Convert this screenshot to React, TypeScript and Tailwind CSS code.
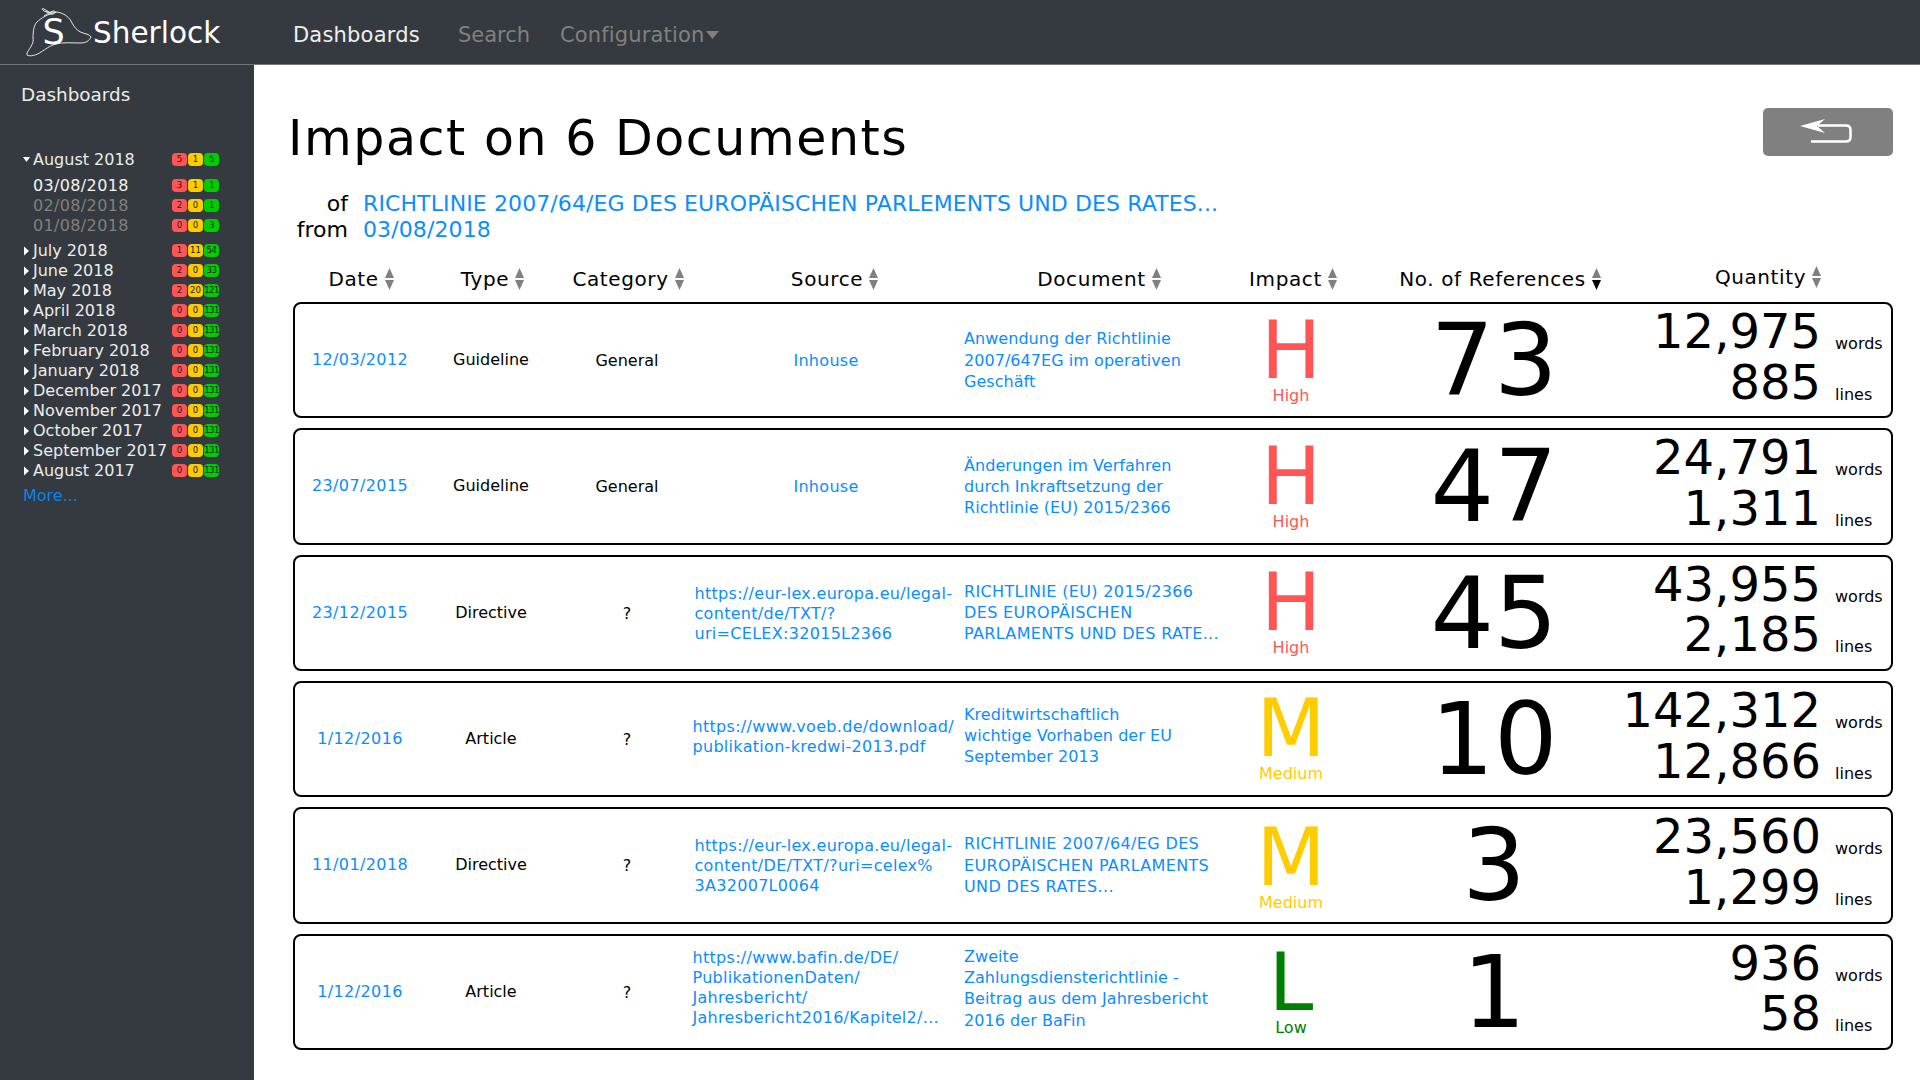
import React from "react";

type Doc = {
  date: string;
  type: string;
  category: string;
  source: string;
  sourceWidth?: string;
  document: string;
  docClass: string;
  level: "H" | "M" | "L";
  impactOffset: string;
  refs: number;
  words: string;
  lines: string;
};

const docs: Doc[] = [
  {
    date: "12/03/2012",
    type: "Guideline",
    category: "General",
    source: "Inhouse",
    document: "Anwendung der Richtlinie\n2007/647EG im operativen\nGeschäft",
    docClass: "tracking-[0.05px]",
    level: "H",
    impactOffset: "pb-[3px]",
    refs: 73,
    words: "12,975",
    lines: "885",
  },
  {
    date: "23/07/2015",
    type: "Guideline",
    category: "General",
    source: "Inhouse",
    document: "Änderungen im Verfahren\ndurch Inkraftsetzung der\nRichtlinie (EU) 2015/2366",
    docClass: "tracking-[0.05px]",
    level: "H",
    impactOffset: "pb-[3px]",
    refs: 47,
    words: "24,791",
    lines: "1,311",
  },
  {
    date: "23/12/2015",
    type: "Directive",
    category: "?",
    source: "https://eur-lex.europa.eu/legal-\ncontent/de/TXT/?\nuri=CELEX:32015L2366",
    sourceWidth: "w-[263px]",
    document: "RICHTLINIE (EU) 2015/2366\nDES EUROPÄISCHEN\nPARLAMENTS UND DES RATE...",
    docClass: "tracking-[0.35px]",
    level: "H",
    impactOffset: "pb-[3px]",
    refs: 45,
    words: "43,955",
    lines: "2,185",
  },
  {
    date: "1/12/2016",
    type: "Article",
    category: "?",
    source: "https://www.voeb.de/download/\npublikation-kredwi-2013.pdf",
    sourceWidth: "w-[267px] mb-[6px]",
    document: "Kreditwirtschaftlich\nwichtige Vorhaben der EU\nSeptember 2013",
    docClass: "tracking-[0.05px] pb-[7px]",
    level: "M",
    impactOffset: "pb-[4px]",
    refs: 10,
    words: "142,312",
    lines: "12,866",
  },
  {
    date: "11/01/2018",
    type: "Directive",
    category: "?",
    source: "https://eur-lex.europa.eu/legal-\ncontent/DE/TXT/?uri=celex%\n3A32007L0064",
    sourceWidth: "w-[263px]",
    document: "RICHTLINIE 2007/64/EG DES\nEUROPÄISCHEN PARLAMENTS\nUND DES RATES...",
    docClass: "tracking-[0.35px]",
    level: "M",
    impactOffset: "pt-px",
    refs: 3,
    words: "23,560",
    lines: "1,299",
  },
  {
    date: "1/12/2016",
    type: "Article",
    category: "?",
    source: "https://www.bafin.de/DE/\nPublikationenDaten/\nJahresbericht/\nJahresbericht2016/Kapitel2/...",
    sourceWidth: "w-[267px] mb-[10px]",
    document: "Zweite\nZahlungsdiensterichtlinie -\nBeitrag aus dem Jahresbericht\n2016 der BaFin",
    docClass: "tracking-[0.05px] pb-[7px]",
    level: "L",
    impactOffset: "pb-[2px]",
    refs: 1,
    words: "936",
    lines: "58",
  },
];

const months = [
  ["July 2018", "1", "11", "54"],
  ["June 2018", "2", "0", "33"],
  ["May 2018", "2", "20", "121"],
  ["April 2018", "0", "0", "131"],
  ["March 2018", "0", "0", "131"],
  ["February 2018", "0", "0", "131"],
  ["January 2018", "0", "0", "131"],
  ["December 2017", "0", "0", "131"],
  ["November 2017", "0", "0", "131"],
  ["October 2017", "0", "0", "131"],
  ["September 2017", "0", "0", "131"],
  ["August 2017", "0", "0", "131"],
];

const levelStyle = {
  H: { text: "text-[#ff5555]", label: "High" },
  M: { text: "text-[#ffcc00]", label: "Medium" },
  L: { text: "text-[#008000]", label: "Low" },
};

const Badges = ({ r, y, g }: { r: string; y: string; g: string }) => (
  <div className="-mt-[2px] flex gap-px text-[8.5px] leading-none text-[#1a1a1a]">
    <span className="flex h-[13px] w-[15px] items-center justify-center rounded-[4px] bg-[#ff5555]">{r}</span>
    <span className="flex h-[13px] w-[15px] items-center justify-center rounded-[4px] bg-[#ffcc00]">{y}</span>
    <span className="flex h-[13px] w-[15px] items-center justify-center rounded-[4px] bg-[#00cc00] tracking-[-0.5px]">{g}</span>
  </div>
);

const SortArrows = ({ active }: { active?: boolean }) => (
  <svg width="9" height="22" viewBox="0 0 9 22" className="ml-[6px] shrink-0">
    <path d="M4.5 0 L9 10 L0 10 Z" fill="#808080" />
    <path d="M4.5 22 L9 12 L0 12 Z" fill={active ? "#000000" : "#808080"} />
  </svg>
);

const HeadCell = ({ label, active, className }: { label: string; active?: boolean; className?: string }) => (
  <div className={`flex items-center justify-center ${className ?? ""}`}>
    {label}
    <SortArrows active={active} />
  </div>
);

const Row = ({ doc }: { doc: Doc }) => {
  const level = levelStyle[doc.level];
  return (
    <div className="grid h-[116.33px] grid-cols-[130px_132px_133px_272px_263px_132px_274px_minmax(0,1fr)] grid-rows-[minmax(0,1fr)] items-center rounded-[8px] border-2 border-black text-center text-[16px]">
      <a className="tracking-[0.4px] text-[#0a8dff]">{doc.date}</a>
      <div>{doc.type}</div>
      <div className="pl-[7px] pt-[2px]">{doc.category}</div>
      <div className="flex justify-center pt-[2px] tracking-[0.3px] text-[#0a8dff]">
        <a className={`whitespace-pre-line text-left leading-[20px] ${doc.sourceWidth ?? "text-center"}`}>{doc.source}</a>
      </div>
      <a className={`whitespace-pre-line pl-[2px] text-left leading-[21.33px] text-[#0a8dff] ${doc.docClass}`}>{doc.document}</a>
      <div className={`flex flex-col items-center ${doc.impactOffset} ${level.text}`}>
        <span className="text-[80px] leading-[80px]">{doc.level}</span>
        <span className="mt-[-6px] leading-[22px]">{level.label}</span>
      </div>
      <div className="pt-[2px] text-[100px] leading-none">{doc.refs}</div>
      <div className="-ml-[20px] pb-[7px]">
        {[
          [doc.words, "words"],
          [doc.lines, "lines"],
        ].map(([value, unit]) => (
          <div key={unit} className="flex h-[50.5px] items-baseline justify-end">
            <span className="text-[48px] leading-[50px]">{value}</span>
            <span className="ml-[14px] w-[56px] translate-y-px text-left leading-[20px]">{unit}</span>
          </div>
        ))}
      </div>
    </div>
  );
};

export default function App() {
  return (
    <div className="flex h-screen flex-col overflow-hidden bg-white font-['DejaVu_Sans',sans-serif] text-black">
      <header className="flex h-[65px] shrink-0 items-center border-b border-[#70757a] bg-[#343a40]">
        <div className="relative ml-[24px] flex h-[64px] w-[240px] items-center">
          <svg width="70" height="64" viewBox="24 0 70 64" className="shrink-0">
            <g fill="none" stroke="#e8e8e8" strokeWidth="1">
              <path d="M27 53 C31 46 34 43 33 38 C33 31 34 25 37 22 C41 18 48 14 57 12 C63 13 68 16 71 21 C74 27 77 31 83 33 C87 34 90 35 91 37 C89 41 86 43 80 43 C72 43 63 42 56 44 C49 46 46 49 41 52 C37 55 30 57 27 55 Z" />
              <path d="M56 12 C52 12 47 13 44 11 C41 9 42 8 44 9 C48 11 50 13 52 14" />
              <path d="M44 16 C47 14 50 12 53 11 C56 11 56 13 53 14 C51 15 47 13 46 11" />
            </g>
          </svg>
          <span className="absolute left-[18.5px] top-[13px] text-[35px] leading-[38px] text-white">S</span>
          <span className="ml-[-1px] mt-[2px] text-[29.5px] leading-[38px] text-white">Sherlock</span>
        </div>
        <nav className="ml-[29px] flex items-center pt-[6px] text-[21px] leading-[30px]">
          <a className="tracking-[0.2px] text-[#f0f0f0]">Dashboards</a>
          <a className="ml-[38px] text-[#808080]">Search</a>
          <a className="ml-[30px] flex items-center tracking-[0.15px] text-[#808080]">
            Configuration
            <svg width="13" height="8" viewBox="0 0 13 8" className="ml-[2px]">
              <path d="M0 0 H13 L6.5 8 Z" fill="#808080" />
            </svg>
          </a>
        </nav>
      </header>
      <div className="flex min-h-0 flex-1">
        <aside className="w-[254px] shrink-0 bg-[#343a40] text-[16px] text-[#ececec]">
          <div className="pl-[21px] pt-[18px] text-[18.4px] leading-[24px]">Dashboards</div>
          <div className="mt-[43px] pl-[23px] text-[16px]">
            <div className="flex h-[20px] items-center leading-[20px]">
              <svg width="10" height="10" viewBox="0 0 10 10" className="shrink-0">
                <path d="M0 2 H7 L3.5 7 Z" fill="#ffffff" />
              </svg>
              <span className="w-[139px] whitespace-nowrap">August 2018</span>
              <Badges r="5" y="1" g="5" />
            </div>
            <div className="mb-[5px] mt-[6px]">
              {[
                ["03/08/2018", "3", "1", "1", "text-[#f4f4f4]"],
                ["02/08/2018", "2", "0", "1", "text-[#808080]"],
                ["01/08/2018", "0", "0", "3", "text-[#808080]"],
              ].map(([day, r, y, g, color]) => (
                <div key={day} className="flex h-[20px] items-center pl-[10px] leading-[20px]">
                  <span className={`w-[139px] tracking-[0.35px] ${color}`}>{day}</span>
                  <Badges r={r} y={y} g={g} />
                </div>
              ))}
            </div>
            {months.map(([name, r, y, g]) => (
              <div key={name} className="flex h-[20px] items-center leading-[20px]">
                <svg width="10" height="10" viewBox="0 0 10 10" className="shrink-0">
                  <path d="M1 0.5 L6 5 L1 9.5 Z" fill="#ffffff" />
                </svg>
                <span className="w-[139px] whitespace-nowrap">{name}</span>
                <Badges r={r} y={y} g={g} />
              </div>
            ))}
            <a className="mt-[5px] block leading-[20px] text-[#0a84e8]">More...</a>
          </div>
        </aside>
        <main className="min-w-0 flex-1 pl-[39px] pr-[27px]">
          <div className="flex justify-between pt-[45px]">
            <h1 className="ml-[-5px] text-[49px] leading-[58px] tracking-[1.55px]">Impact on 6 Documents</h1>
            <button className="mt-[-2px] flex h-[48px] w-[130px] items-center justify-center rounded-[5px] bg-[#808080]">
              <svg width="52" height="26" viewBox="0 0 52 26" fill="none" className="ml-[-4px]">
                <path d="M18 6.5 H46 C49 6.5 50.5 8 50.5 11 V18 C50.5 21 49 22.5 46 22.5 H11" stroke="#ffffff" strokeWidth="2.5" />
                <path d="M0 7 L25 0 L17 7 L25 14 Z" fill="#ffffff" />
              </svg>
            </button>
          </div>
          <div className="mt-[23px] grid grid-cols-[55px_1fr] gap-x-[15px] text-[22px] leading-[26px]">
            <div className="text-right">of</div>
            <a className="tracking-[0.11px] text-[#0a8dff]">RICHTLINIE 2007/64/EG DES EUROPÄISCHEN PARLEMENTS UND DES RATES...</a>
            <div className="text-right">from</div>
            <a className="tracking-[0.11px] text-[#0a8dff]">03/08/2018</a>
          </div>
          <div className="mt-[21px] grid h-[30px] grid-cols-[136px_127px_144px_269px_260px_128px_286px_minmax(0,1fr)] items-center text-[20px] tracking-[0.6px]">
            <HeadCell label="Date" />
            <HeadCell label="Type" />
            <HeadCell label="Category" />
            <HeadCell label="Source" />
            <HeadCell label="Document" />
            <HeadCell label="Impact" />
            <HeadCell label="No. of References" active />
            <HeadCell label="Quantity" className="-mt-[4px]" />
          </div>
          <div className="mt-[8px] flex flex-col gap-[10px]">
            {docs.map((doc, i) => (
              <Row key={i} doc={doc} />
            ))}
          </div>
        </main>
      </div>
    </div>
  );
}
